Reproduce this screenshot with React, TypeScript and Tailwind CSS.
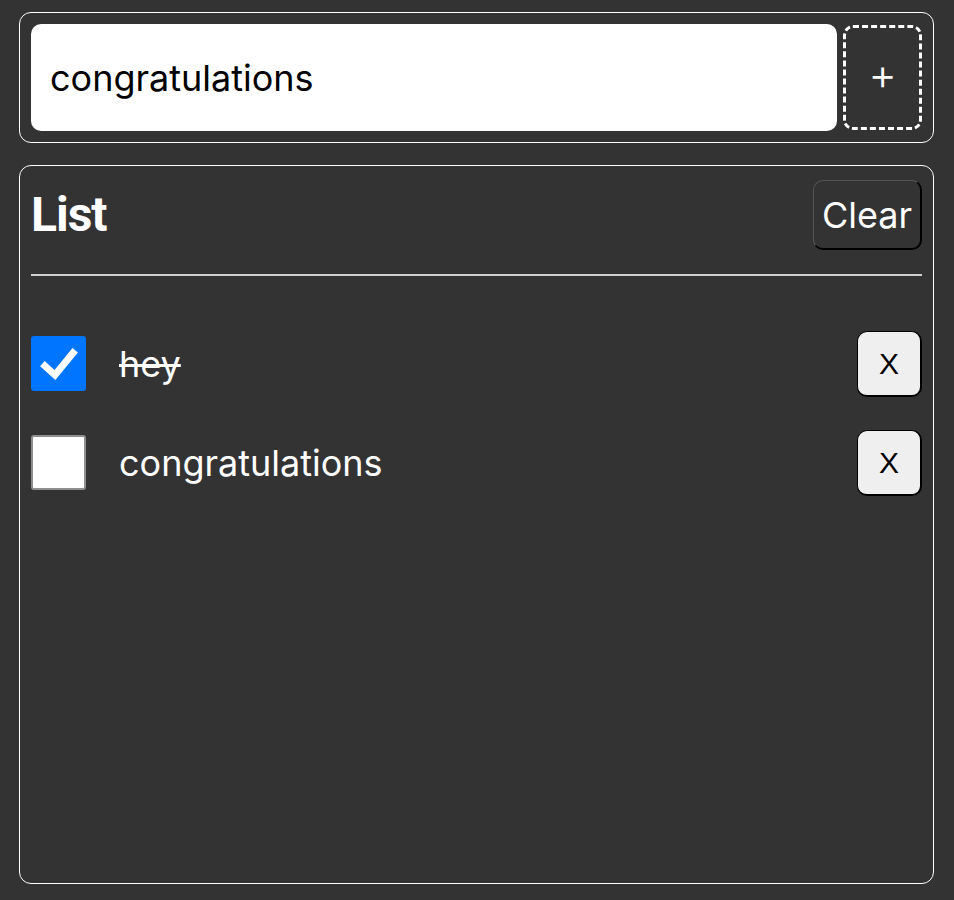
import React from "react";

function Check({ checked }: { checked: boolean }) {
  if (checked) {
    return (
      <div className="w-[55px] h-[55px] rounded-[3px] bg-[#0075ff] flex items-center justify-center shrink-0">
        <svg width="44" height="44" viewBox="0 0 44 44">
          <path d="M8 24 L18 33 L36 11" fill="none" stroke="white" strokeWidth="7" strokeLinecap="square" />
        </svg>
      </div>
    );
  }
  return <div className="w-[55px] h-[55px] rounded-[3px] bg-white border-2 border-[#8f8f8f] shrink-0" />;
}

function Row({ text, done }: { text: string; done: boolean }) {
  return (
    <div className="flex items-center h-[65px]">
      <Check checked={done} />
      <span className={"ml-[33px] text-[36px] text-white flex-1 " + (done ? "line-through" : "")}>{text}</span>
      <button className="w-[65px] h-[66px] rounded-[10px] bg-[#efefef] border-r-2 border-b-2 border-l border-t border-black text-black text-[30px] font-['Liberation_Sans',sans-serif]">
        X
      </button>
    </div>
  );
}

export default function App() {
  return (
    <div className="min-h-[900px] bg-[#333333] pl-[19px] pr-[20px] pt-[12px] font-['Inter',sans-serif]">
      <div className="border border-white rounded-[12px] p-[11px] flex gap-[6px]">
        <div className="flex-1 h-[107px] bg-white rounded-[10px] flex items-center pl-[19px] text-[36px] text-black">
          congratulations
        </div>
        <button className="w-[79px] h-[105px] mt-[1px] pb-[8px] border-[3px] border-dashed border-white rounded-[10px] text-white text-[44px] font-light leading-none flex items-center justify-center">
          +
        </button>
      </div>
      <div className="mt-[22px] border border-white rounded-[12px] h-[719px] px-[11px] pt-[14px]">
        <div className="flex items-center justify-between h-[70px]">
          <h1 className="text-[48px] font-bold text-white font-['Roboto',sans-serif] tracking-[-1px]">List</h1>
          <button className="w-[109px] h-[70px] rounded-[10px] bg-[#333333] border-t border-l border-[#555] border-r-2 border-b-2 border-r-black border-b-black text-white text-[36px]">
            Clear
          </button>
        </div>
        <div className="mt-[24px] h-[2px] bg-[#d0d0d0]" />
        <div className="mt-[55px] flex flex-col gap-[34px]">
          <Row text="hey" done={true} />
          <Row text="congratulations" done={false} />
        </div>
      </div>
    </div>
  );
}
